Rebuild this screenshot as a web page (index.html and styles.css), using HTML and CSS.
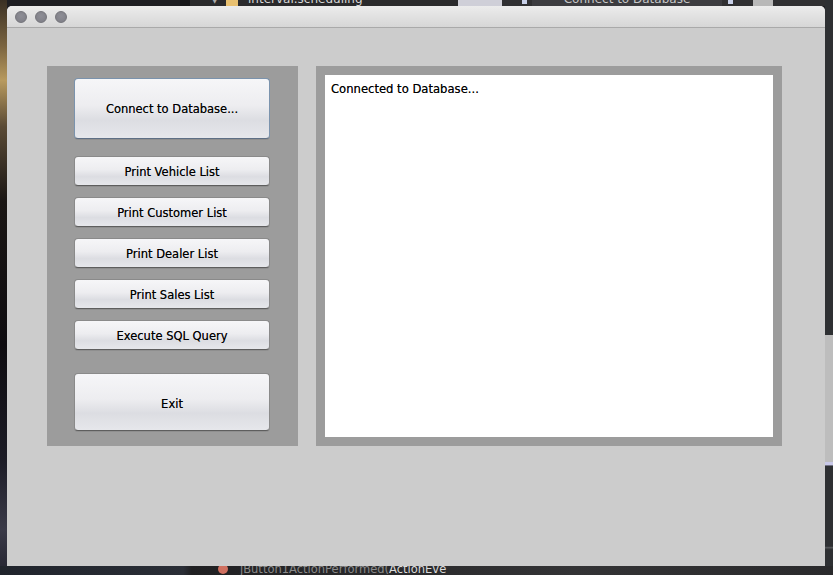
FILE: index.html
```html
<!DOCTYPE html>
<html>
<head>
<meta charset="utf-8">
<link rel="stylesheet" href="styles.css">
</head>
<body>
<div class="desktop">
  <div class="bg-left"></div>
  <div class="bg-top1"><span class="tri">▼</span><span class="folder"></span><span class="bgtext">interval.scheduling</span></div>
  <div class="bg-top2"><span class="bglight"></span><span class="sq sq1"></span><span class="bgbtn">Connect to Database</span><span class="sq sq2"></span><span class="bglight2"></span></div>
  <div class="bg-right"></div>
  <div class="bg-bottom"><span class="dot"></span><span class="bgtext2">jButton1ActionPerformed(<b>ActionEve</b></span></div>

  <div class="window">
    <div class="titlebar">
      <span class="light"></span><span class="light"></span><span class="light"></span>
    </div>
    <div class="content">
      <div class="panel left">
        <button class="btn big default">Connect to Database...</button>
        <div class="list">
          <button class="btn">Print Vehicle List</button>
          <button class="btn">Print Customer List</button>
          <button class="btn">Print Dealer List</button>
          <button class="btn">Print Sales List</button>
          <button class="btn">Execute SQL Query</button>
        </div>
        <button class="btn big exit">Exit</button>
      </div>
      <div class="panel right">
        <div class="output">Connected to Database...</div>
      </div>
    </div>
  </div>
</div>
</body>
</html>
```
FILE: styles.css
```css
html, body {
  margin: 0;
  padding: 0;
}
body {
  width: 833px;
  height: 575px;
  overflow: hidden;
  background: #1e1e22;
  font-family: "DejaVu Sans", "Liberation Sans", sans-serif;
}
.desktop {
  position: relative;
  width: 833px;
  height: 575px;
  padding: 6px 0 0 7px;
  box-sizing: border-box;
}
.bg-left {
  position: absolute;
  left: 0; top: 0;
  width: 7px; height: 575px;
  background: linear-gradient(180deg, #3a3024 0%, #7a6440 8%, #b89a5e 14%, #5a4a35 22%, #1a1614 35%, #0e0c10 60%, #1c1c26 80%, #3a3a48 92%, #242430 100%);
}
.bg-top1 {
  position: absolute;
  left: 180px; top: 0;
  width: 268px; height: 6px;
  background: #2a2a2c;
  overflow: hidden;
  border-left: 10px solid #151517;
}
.tri {
  position: absolute; left: 22px; top: -3px;
  font-size: 7px; color: #aaa;
}
.folder {
  position: absolute; left: 36px; top: 0;
  width: 12px; height: 6px;
  background: #e8c070;
}
.bgtext {
  position: absolute; left: 58px; top: -8px;
  font-size: 12px; color: #d8d8d8;
}
.bg-top2 {
  position: absolute;
  left: 458px; top: 0;
  width: 375px; height: 6px;
  background: #303032;
  overflow: hidden;
}
.bglight {
  position: absolute; left: 0; top: 0;
  width: 44px; height: 6px;
  background: #cfcfd8;
}
.bglight2 {
  position: absolute; left: 295px; top: 0;
  width: 20px; height: 6px;
  background: #b8b8b8;
}
.sq {
  position: absolute; top: 0;
  width: 5px; height: 4px;
  background: #c8d0e8;
}
.sq1 { left: 64px; }
.sq2 { left: 270px; }
.bgbtn {
  position: absolute; left: 74px; top: -8px;
  width: 190px; height: 14px;
  background: #3c3c40;
  color: #c8c8c8;
  font-size: 12px;
  text-align: center;
}
.bg-right {
  position: absolute;
  left: 825px; top: 0;
  width: 8px; height: 575px;
  background: linear-gradient(180deg, #2e3033 0%, #2e3033 58.2%, #bdbdbd 58.3%, #bdbdbd 80.3%, #c8c8e8 80.4%, #c8c8e8 80.9%, #2e3033 81%, #2e3033 95%, #55575a 95.2%, #2e3033 95.6%, #2e3033 100%);
}
.bg-bottom {
  position: absolute;
  left: 0; top: 566px;
  width: 833px; height: 9px;
  background: linear-gradient(90deg, #20242c 0%, #2a2e36 22%, #202022 23%, #333335 69%, #2a2a2c 100%);
  overflow: hidden;
}
.dot {
  position: absolute; left: 218px; top: -2px;
  width: 10px; height: 10px; border-radius: 50%;
  background: #d07060;
}
.bgtext2 {
  position: absolute; left: 240px; top: -4px;
  font-size: 11.5px; color: #8a8a8a;
}
.bgtext2 b { color: #dcdcdc; font-weight: normal; }

.window {
  position: relative;
  width: 818px;
  height: 560px;
  background: #cccccc;
  border-radius: 5px 5px 0 0;
  overflow: hidden;
  display: flex;
  flex-direction: column;
}
.titlebar {
  height: 21px;
  background: linear-gradient(180deg, #ececec 0%, #d6d6d6 100%);
  border-bottom: 1px solid #a9a9a9;
  display: flex;
  align-items: center;
  gap: 8px;
  padding-left: 8px;
}
.light {
  width: 12px; height: 12px;
  box-sizing: border-box;
  border-radius: 50%;
  background: radial-gradient(circle at 50% 40%, #8e8e96 0%, #7d7d85 100%);
  border: 1px solid #74747a;
}
.content {
  display: flex;
  gap: 18px;
  padding: 38px 0 0 40px;
}
.panel {
  height: 380px;
  background: #9c9c9c;
  box-sizing: border-box;
}
.left {
  width: 251px;
  padding: 12px 0 0 27px;
  display: flex;
  flex-direction: column;
}
.list {
  margin-top: 17px;
  display: flex;
  flex-direction: column;
  gap: 11px;
}
.btn {
  width: 196px;
  height: 30px;
  box-sizing: border-box;
  border: 1px solid #8a8a8a;
  border-bottom-color: #5e5e5e;
  border-radius: 4px;
  background: linear-gradient(180deg, #f6f6f8 0%, #ededf0 45%, #dcdde2 70%, #e6e7eb 100%);
  font-family: "DejaVu Sans", "Liberation Sans", sans-serif;
  font-size: 11.5px;
  color: #000;
  padding: 4px 0 0 0;
  line-height: 1;
  text-shadow: 0 0 0.4px rgba(0,0,0,0.6);
  box-shadow: 0 1px 0 rgba(0,0,0,0.08);
}
.btn.big {
  height: 61px;
  padding-top: 3px;
}
.btn.default {
  border-color: #7b93ad;
  border-bottom-color: #5e6f85;
}
.btn.exit {
  margin-top: 23px;
  height: 58px;
  padding-top: 6px;
}
.right {
  width: 466px;
  padding: 9px;
}
.output {
  width: 100%;
  height: 100%;
  background: #ffffff;
  box-sizing: border-box;
  padding: 7px 6px;
  font-size: 11.6px;
  color: #000;
  text-shadow: 0 0 0.4px rgba(0,0,0,0.6);
}
```
